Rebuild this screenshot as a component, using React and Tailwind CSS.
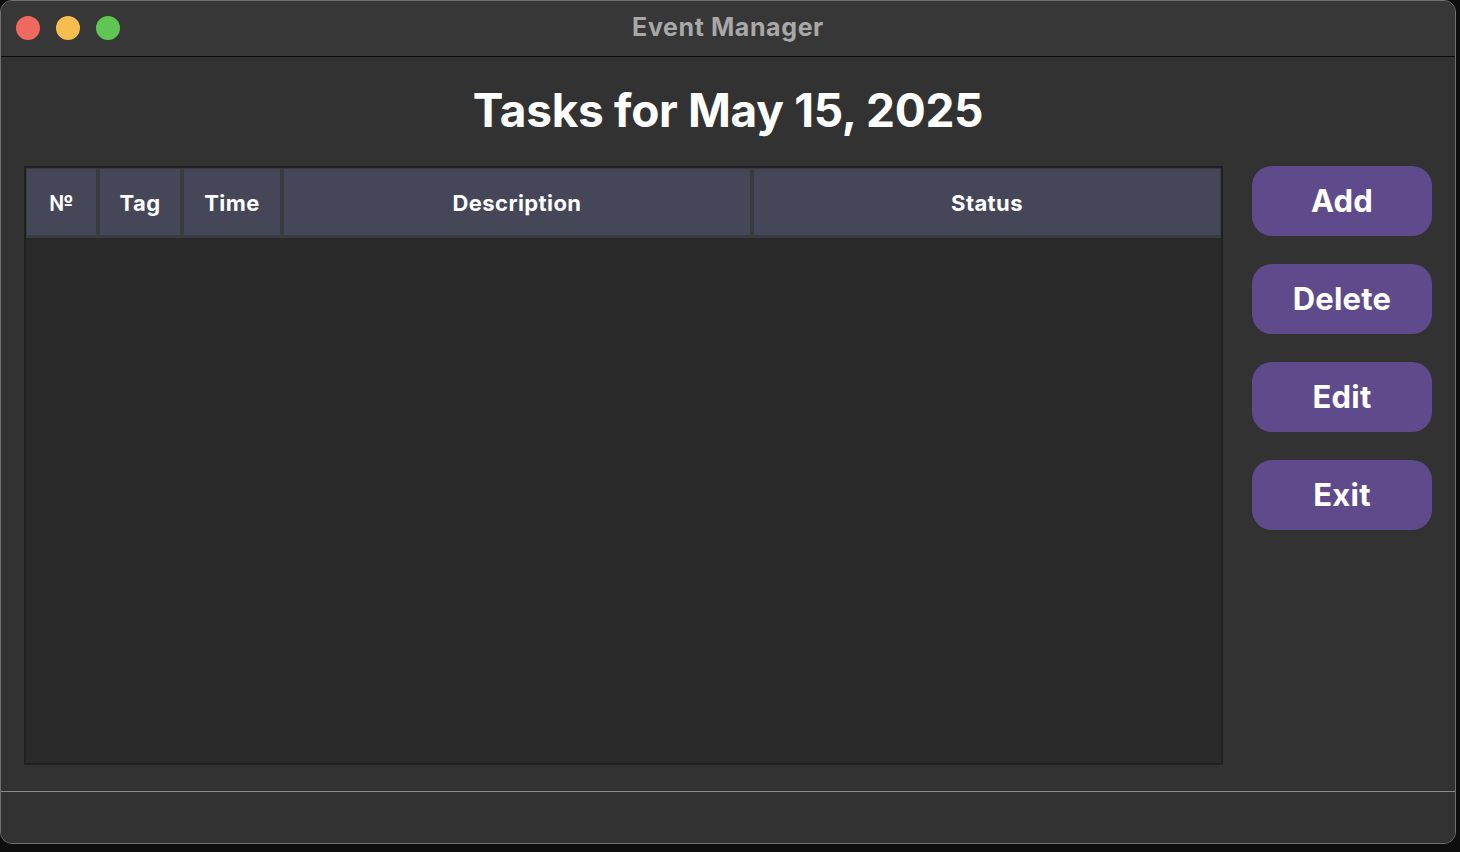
export default function App() {
  const cols = [
    { label: "№", w: "w-[69px]" },
    { label: "Tag", w: "w-[80px]" },
    { label: "Time", w: "w-[96px]" },
    { label: "Description", w: "w-[466px]" },
    { label: "Status", w: "w-[466px]" },
  ];
  const buttons = ["Add", "Delete", "Edit", "Exit"];
  return (
    <div
      className="w-[1460px] h-[852px] bg-[#0e0e0e] overflow-hidden"
      style={{ fontFamily: "Inter, 'Noto Sans', sans-serif" }}
    >
      <div className="w-[1456px] h-[844px] rounded-[12px] border border-[#707070] bg-[#323232] overflow-hidden flex flex-col">
        {/* Title bar */}
        <div className="h-[56px] shrink-0 bg-[#373737] border-b border-[#0a0a0a] relative flex items-center justify-center">
          <div className="absolute left-[15px] top-[15px] flex gap-[16px]">
            <div className="w-[24px] h-[24px] rounded-full bg-[#ee6a5f]" />
            <div className="w-[24px] h-[24px] rounded-full bg-[#f5be4f]" />
            <div className="w-[24px] h-[24px] rounded-full bg-[#61c554]" />
          </div>
          <span className="text-[25px] font-bold text-[#a8a8a8] tracking-[0.6px] pb-[2px]">Event Manager</span>
        </div>

        {/* Content */}
        <div className="flex-1 flex flex-col">
          <div className="h-[109px] flex items-center justify-center pb-[3px]">
            <h1 className="text-[46px] font-bold text-white tracking-[-0.3px]">Tasks for May 15, 2025</h1>
          </div>
          <div className="flex pl-[23px]">
            <div className="w-[1199px] h-[599px] border-2 border-[#202020] bg-[#2a2a2a] flex flex-col">
              <div className="flex gap-[4px] bg-[#3a3b3e] p-[1px] pb-[3px]">
                {cols.map((c) => (
                  <div
                    key={c.label}
                    className={`${c.w} h-[66px] bg-[#454759] flex items-center justify-center pt-[3px] text-[22px] font-bold text-white tracking-[0.4px]`}
                  >
                    {c.label}
                  </div>
                ))}
              </div>
              <div className="flex-1" />
            </div>
            <div className="ml-[29px] flex flex-col gap-[28px]">
              {buttons.map((b) => (
                <button
                  key={b}
                  className="w-[180px] h-[70px] rounded-[20px] bg-[#5f4b8b] text-white text-[31px] font-bold flex items-center justify-center tracking-[0.2px]"
                >
                  {b}
                </button>
              ))}
            </div>
          </div>
          <div className="flex-1" />
          <div className="h-[52px] border-t border-[#8a8a8a] bg-[#323232]" />
        </div>
      </div>
    </div>
  );
}
